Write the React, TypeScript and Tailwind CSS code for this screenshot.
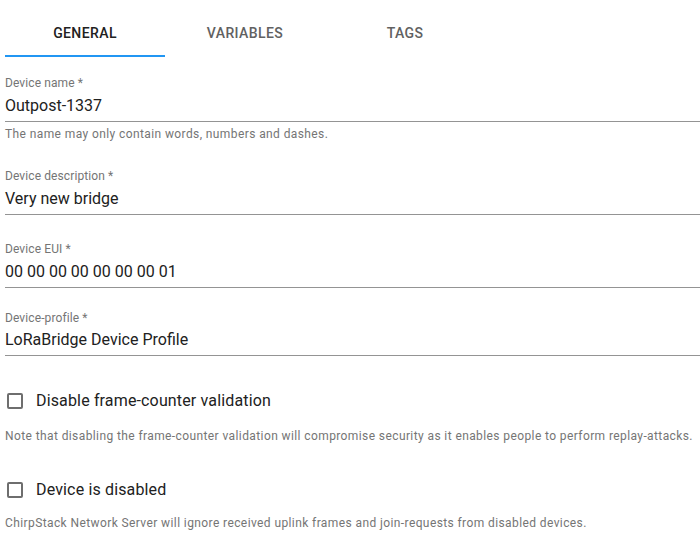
import React from "react";

const TABS = ["GENERAL", "VARIABLES", "TAGS"];

function Field({
  label,
  value,
  className,
  inputClass,
}: {
  label: string;
  value: string;
  className: string;
  inputClass: string;
}) {
  return (
    <div className={className}>
      <div className="text-[12px] leading-[16px] tracking-[0.1px] text-[#757575]">{label}</div>
      <div className={inputClass}>{value}</div>
    </div>
  );
}

function Check({ label, className }: { label: string; className: string }) {
  return (
    <div className={`flex items-center h-[24px] ${className}`}>
      <div className="ml-[2px] w-[16px] h-[16px] rounded-[2px] border-2 border-[#6e6e6e]" />
      <span className="ml-[13px] text-[16px] leading-[24px] tracking-[0.15px] text-[#212121]">{label}</span>
    </div>
  );
}

export default function App() {
  return (
    <div
      className="w-[700px] h-[546px] bg-white pt-[9px] pl-[5px] overflow-hidden"
      style={{ fontFamily: "Roboto, 'Liberation Sans', sans-serif" }}
    >
      {/* Tabs */}
      <div className="flex h-[48px]">
        {TABS.map((t, i) => (
          <div
            key={t}
            className={
              i === 0
                ? "w-[160px] flex items-center justify-center text-[14px] font-medium tracking-[0.4px] text-[#212121] border-b-2 border-[#2196f3] pt-[2px]"
                : "w-[160px] flex items-center justify-center text-[14px] font-medium tracking-[0.4px] text-[#616161]"
            }
          >
            {t}
          </div>
        ))}
      </div>

      {/* Form */}
      <Field
        label="Device name *"
        value="Outpost-1337"
        className="mt-[18px]"
        inputClass="mt-[5px] pb-[6px] border-b border-[#949494] text-[16px] leading-[19px] text-[#212121]"
      />
      <div className="mt-[6px] text-[12px] leading-[12px] tracking-[0.4px] text-[#757575]">
        The name may only contain words, numbers and dashes.
      </div>

      <Field
        label="Device description *"
        value="Very new bridge"
        className="mt-[28px]"
        inputClass="mt-[5px] pb-[6px] border-b border-[#949494] text-[16px] leading-[19px] text-[#212121]"
      />

      <Field
        label="Device EUI *"
        value="00 00 00 00 00 00 00 01"
        className="mt-[26px]"
        inputClass="mt-[5px] pb-[6px] border-b border-[#949494] text-[16px] leading-[19px] text-[#212121]"
      />

      <Field
        label="Device-profile *"
        value="LoRaBridge Device Profile"
        className="mt-[22px]"
        inputClass="mt-[4px] pb-[6px] border-b border-[#949494] text-[16px] leading-[19px] text-[#212121]"
      />

      <Check label="Disable frame-counter validation" className="mt-[33px]" />
      <div className="mt-[17px] text-[12px] leading-[12px] tracking-[0.4px] text-[#757575]">
        Note that disabling the frame-counter validation will compromise security as it enables people to perform replay-attacks.
      </div>

      <Check label="Device is disabled" className="mt-[36px]" />
      <div className="mt-[15px] text-[12px] leading-[12px] tracking-[0.4px] text-[#757575]">
        ChirpStack Network Server will ignore received uplink frames and join-requests from disabled devices.
      </div>
    </div>
  );
}
